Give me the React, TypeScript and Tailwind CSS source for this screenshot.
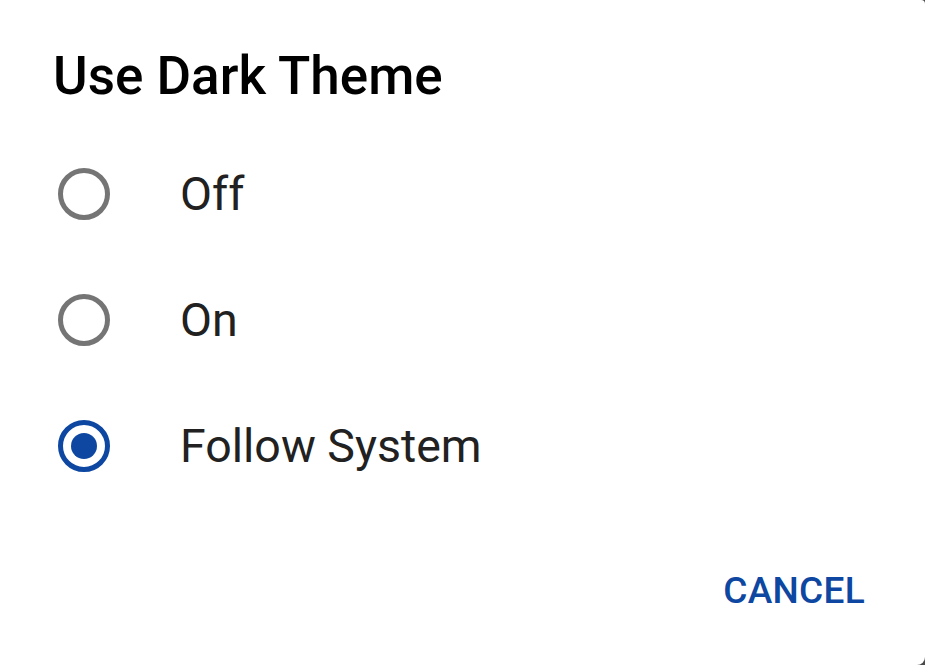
import React from "react";

const options = ["Off", "On", "Follow System"];

function Radio({ checked }: { checked: boolean }) {
  return (
    <svg width="56" height="56" viewBox="0 0 56 56" className="shrink-0">
      <circle
        cx="28"
        cy="28"
        r="23.5"
        fill="none"
        stroke={checked ? "#0d47a1" : "#757575"}
        strokeWidth="5"
      />
      {checked && <circle cx="28" cy="28" r="13" fill="#0d47a1" />}
    </svg>
  );
}

export default function App() {
  const selected = "Follow System";
  return (
    <div className="w-[925px] h-[665px] bg-[#4a4a4a] overflow-hidden">
      <div
        className="w-full h-full bg-white rounded-tr-[4px] rounded-br-[8px] flex flex-col"
        style={{ fontFamily: "Roboto, 'Liberation Sans', sans-serif" }}
      >
        <h1 className="pl-[53px] pt-[50px] text-[53px] leading-[52px] font-medium text-black">
          Use Dark Theme
        </h1>
        <div className="mt-[29px] flex flex-col">
          {options.map((o) => (
            <div key={o} className="h-[126px] flex items-center pl-[56px]">
              <Radio checked={o === selected} />
              <span className="ml-[68px] text-[46.5px] leading-none text-[#212121]">{o}</span>
            </div>
          ))}
        </div>
        <div className="flex justify-end pr-[60px] mt-[63px]">
          <button className="text-[37px] leading-[37px] font-medium text-[#0d47a1] tracking-[0.3px]">
            CANCEL
          </button>
        </div>
      </div>
    </div>
  );
}
